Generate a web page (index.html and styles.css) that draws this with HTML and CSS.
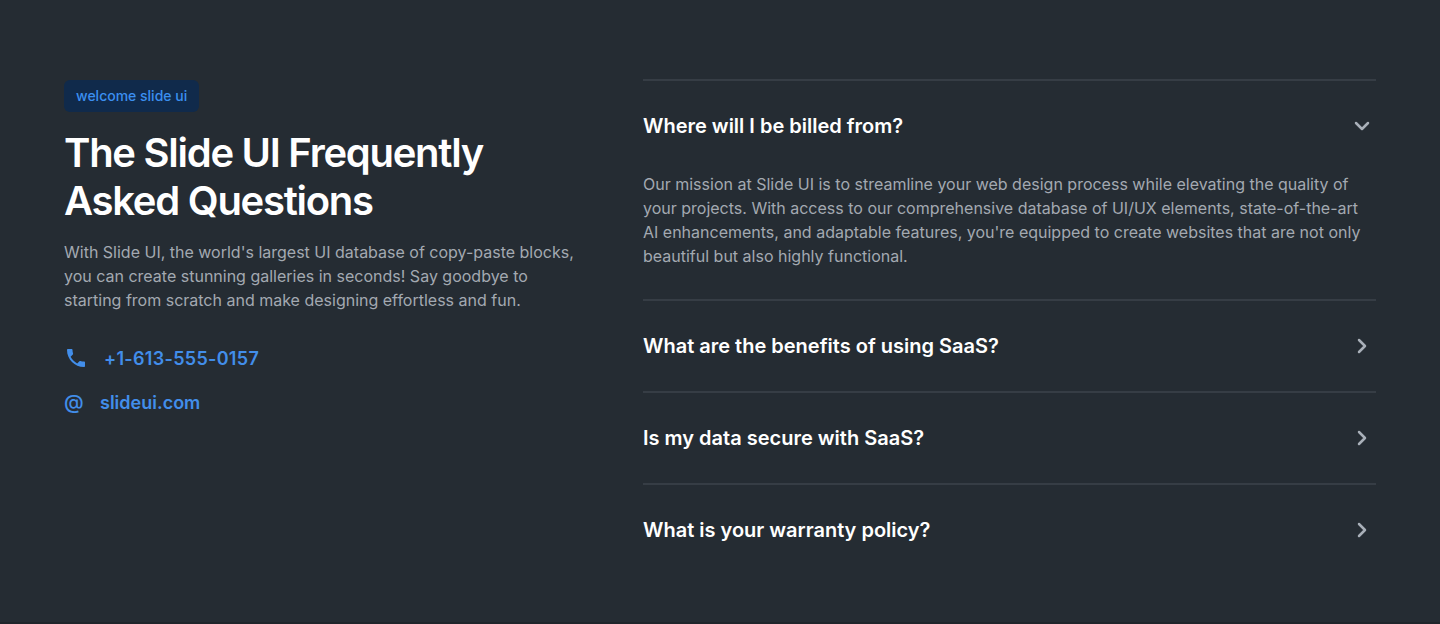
FILE: index.html
```html
<!DOCTYPE html>
<html lang="en">
<head>
<meta charset="utf-8">
<title>Slide UI FAQ</title>
<link rel="stylesheet" href="styles.css">
</head>
<body>
<main class="faq">
  <section class="intro">
    <span class="badge">welcome slide ui</span>
    <h1 class="title">The Slide UI Frequently<br>Asked Questions</h1>
    <p class="lead">With Slide UI, the world's largest UI database of copy-paste blocks,<br>you can create stunning galleries in seconds! Say goodbye to<br>starting from scratch and make designing effortless and fun.</p>
    <a class="contact phone"><svg class="phone-icon" viewBox="0 0 24 24"><path d="M6.62 10.79c1.44 2.83 3.76 5.14 6.59 6.59l2.2-2.2c.27-.27.67-.36 1.02-.24 1.12.37 2.33.57 3.57.57.55 0 1 .45 1 1V20c0 .55-.45 1-1 1C10.61 21 3 13.39 3 4c0-.55.45-1 1-1h3.5c.55 0 1 .45 1 1 0 1.25.2 2.45.57 3.57.11.35.03.74-.25 1.02z"/></svg><span class="number">+1-613-555-0157</span></a>
    <a class="contact site"><span class="at">@</span><span>slideui.com</span></a>
  </section>
  <section class="list">
    <article class="item">
      <h2 class="question">Where will I be billed from?<svg class="chevron" viewBox="0 0 28 28"><path d="M8 11l6 6 6-6"/></svg></h2>
      <p class="answer">Our mission at Slide UI is to streamline your web design process while elevating the quality of<br>your projects. With access to our comprehensive database of UI/UX elements, state-of-the-art<br>AI enhancements, and adaptable features, you're equipped to create websites that are not only<br>beautiful but also highly functional.</p>
    </article>
    <article class="item"><h2 class="question">What are the benefits of using SaaS?<svg class="chevron" viewBox="0 0 28 28"><path d="M11 8l6 6-6 6"/></svg></h2></article>
    <article class="item"><h2 class="question">Is my data secure with SaaS?<svg class="chevron" viewBox="0 0 28 28"><path d="M11 8l6 6-6 6"/></svg></h2></article>
    <article class="item"><h2 class="question">What is your warranty policy?<svg class="chevron" viewBox="0 0 28 28"><path d="M11 8l6 6-6 6"/></svg></h2></article>
  </section>
</main>
</body>
</html>
```
FILE: styles.css
```css
* { box-sizing: border-box; margin: 0; padding: 0; }
body { background: #252c33; font-family: Inter, sans-serif; color: #fff; }
.faq { display: grid; grid-template-columns: 515px 733px; column-gap: 64px; height: 624px; padding: 79px 64px 0; border-bottom: 2px solid #20252b; }
.intro { display: flex; flex-direction: column; align-items: flex-start; }
.badge { height: 32px; margin-top: 1px; padding: 0 12px; border-radius: 6px; background: #102a4b; color: #3b8ff0; font-size: 14px; line-height: 32px; font-weight: 500; white-space: nowrap; }
.title { margin-top: 17px; font-size: 40px; line-height: 48px; font-weight: 600; letter-spacing: -1.27px; white-space: nowrap; }
.lead { margin-top: 15px; }
.lead, .answer { color: #a3a9b1; font-size: 16px; line-height: 24px; white-space: nowrap; }
.contact { display: flex; align-items: center; height: 24px; color: #428eea; font-size: 18px; line-height: 24px; font-weight: 600; }
.phone { margin-top: 35px; gap: 16px; }
.site { margin-top: 20px; gap: 16px; }
.number { letter-spacing: 0.3px; }
.at { width: 20px; margin-bottom: 2px; font-size: 20px; font-weight: 500; }
.phone-icon { width: 24px; height: 24px; margin-bottom: 2px; fill: currentColor; }
.item { border-top: 2px solid #363d45; }
.question { display: flex; align-items: center; justify-content: space-between; height: 90px; font-size: 20px; line-height: 28px; font-weight: 600; }
.chevron { width: 28px; height: 28px; fill: none; stroke: #a9b0b9; stroke-width: 2.5; stroke-linecap: round; stroke-linejoin: round; }
.answer { margin-top: 1px; padding-bottom: 31px; }
```
